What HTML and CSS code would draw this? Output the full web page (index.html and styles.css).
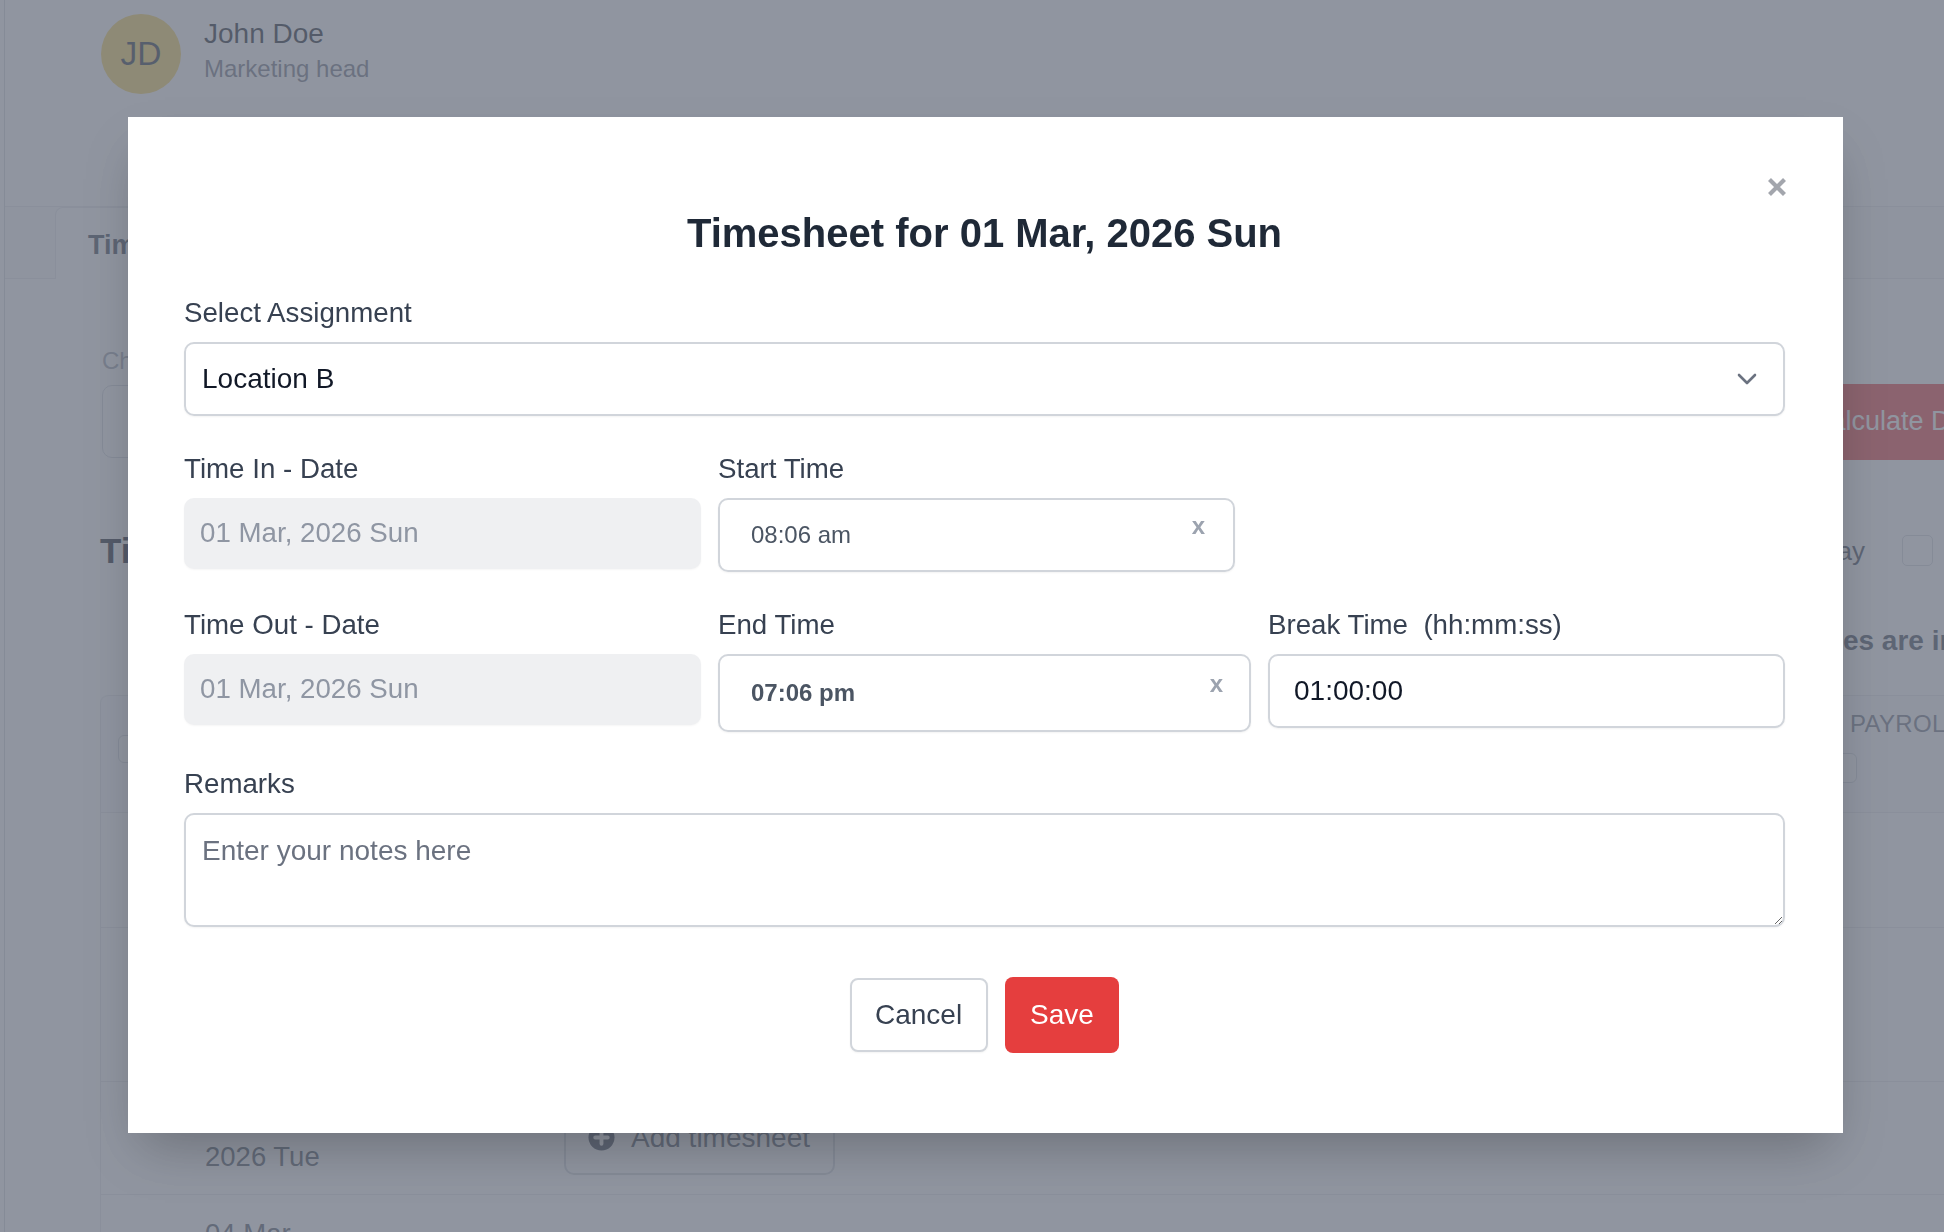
FILE: index.html
```html
<!DOCTYPE html>
<html lang="en">
<head>
<meta charset="utf-8">
<title>Timesheet</title>
<link rel="stylesheet" href="styles.css">
</head>
<body>
<div class="page">
  <div class="shell">
    <header class="topbar">
      <div class="avatar">JD</div>
      <div class="who">
        <div class="who-name">John Doe</div>
        <div class="who-role">Marketing head</div>
      </div>
    </header>
    <nav class="tabs">
      <div class="tab tab-active">Timesheet</div>
    </nav>
    <main class="content">
      <div class="filters">
        <div class="filter-field">
          <div class="filter-label">Choose</div>
          <div class="filter-input"></div>
        </div>
        <button class="btn-calc">Calculate Daily Hours</button>
      </div>
      <div class="heading-row">
        <h2 class="heading">Timesheets</h2>
        <div class="heading-side">
          <span class="heading-side-text">Show Holiday</span>
          <span class="chk chk-lg"></span>
        </div>
      </div>
      <p class="note">All times are in hours for this period</p>
      <div class="table">
        <div class="thead">
          <span class="chk chk-head"></span>
          <div class="th-col">
            <div class="th-label">PAYROLL</div>
            <span class="chk chk-col"></span>
          </div>
        </div>
        <div class="trow trow-1"></div>
        <div class="trow trow-2"></div>
        <div class="trow trow-3">
          <div class="cell-date">03 Mar,<br>2026 Tue</div>
          <button class="btn-add">
            <svg class="btn-add-icon" viewBox="0 0 28 28" width="27" height="27" aria-hidden="true">
              <circle cx="14" cy="14" r="13.5" fill="#374151"/>
              <path d="M14 7.5v13M7.5 14h13" stroke="#ffffff" stroke-width="4" stroke-linecap="round"/>
            </svg>
            <span>Add timesheet</span>
          </button>
        </div>
        <div class="trow trow-4">
          <div class="cell-date">04 Mar,<br>2026 Wed</div>
        </div>
      </div>
    </main>
  </div>
</div>

<div class="overlay">
  <div class="modal" role="dialog" aria-modal="true">
    <button class="modal-close" aria-label="Close">
      <svg viewBox="0 0 20 20" width="20" height="20" aria-hidden="true">
        <path d="M2.5 2.5L17.5 17.5M17.5 2.5L2.5 17.5" stroke="#a3a6ad" stroke-width="4.2" stroke-linecap="butt"/>
      </svg>
    </button>
    <h1 class="modal-title">Timesheet for 01 Mar, 2026 Sun</h1>

    <div class="field field-first">
      <label class="field-label">Select Assignment</label>
      <div class="select">
        <span class="select-value">Location B</span>
        <svg class="select-chevron" viewBox="0 0 20 12" width="20" height="12" aria-hidden="true">
          <path d="M2 2L10 10L18 2" fill="none" stroke="#6b7280" stroke-width="2.6" stroke-linecap="round" stroke-linejoin="round"/>
        </svg>
      </div>
    </div>

    <div class="grid-row">
      <div class="field">
        <label class="field-label">Time In - Date</label>
        <div class="date-box">01 Mar, 2026 Sun</div>
      </div>
      <div class="field">
        <label class="field-label">Start Time</label>
        <div class="time-box time-start">
          <span class="time-value">08:06 am</span>
          <span class="time-clear time-clear-start">x</span>
        </div>
      </div>
    </div>

    <div class="grid-row">
      <div class="field">
        <label class="field-label">Time Out - Date</label>
        <div class="date-box">01 Mar, 2026 Sun</div>
      </div>
      <div class="field">
        <label class="field-label">End Time</label>
        <div class="time-box time-end">
          <span class="time-value time-value-bold">07:06 pm</span>
          <span class="time-clear time-clear-end">x</span>
        </div>
      </div>
      <div class="field">
        <label class="field-label">Break Time&nbsp; (hh:mm:ss)</label>
        <div class="break-box">01:00:00</div>
      </div>
    </div>

    <div class="field field-remarks">
      <label class="field-label">Remarks</label>
      <textarea class="remarks" placeholder="Enter your notes here"></textarea>
    </div>

    <div class="actions">
      <button class="btn btn-cancel">Cancel</button>
      <button class="btn btn-save">Save</button>
    </div>
  </div>
</div>
</body>
</html>
```

FILE: styles.css
```css
* { box-sizing: border-box; }

html, body {
  margin: 0;
  padding: 0;
  width: 1944px;
  height: 1232px;
  overflow: hidden;
  background: #ffffff;
  font-family: "Liberation Sans", Arial, Helvetica, sans-serif;
}

button { font-family: inherit; cursor: pointer; }

/* ---------- background page ---------- */
.page {
  width: 1944px;
  height: 1232px;
  overflow: hidden;
  background: #ffffff;
}

.shell {
  margin-left: 4px;
  border-left: 1px solid #d1d5db;
  height: 1232px;
}

.topbar {
  height: 206px;
  display: flex;
  align-items: flex-start;
  padding: 14px 0 0 96px;
}

.avatar {
  width: 80px;
  height: 80px;
  border-radius: 50%;
  background: #f6d25a;
  color: #1f2937;
  font-size: 33.5px;
  display: flex;
  align-items: center;
  justify-content: center;
  flex: none;
}

.who { margin-left: 23px; margin-top: 2px; }
.who-name { font-size: 28px; line-height: 36px; color: #111827; }
.who-role { font-size: 24px; line-height: 32px; color: #6b7280; margin-top: 1px; }

.tabs {
  height: 73px;
  border-top: 1px solid #e5e7eb;
  border-bottom: 1px solid #e5e7eb;
  background: #fafafb;
  display: flex;
  align-items: flex-end;
  padding-left: 50px;
}

.tab {
  height: 72px;
  margin-bottom: -1px;
  padding: 3px 32px 0;
  display: flex;
  align-items: center;
  font-size: 27px;
  font-weight: 700;
  color: #374151;
  background: #ffffff;
  border: 1px solid #e5e7eb;
  border-bottom: none;
  border-radius: 8px 8px 0 0;
}

.content { padding: 65.7px 0 0 95px; }

.filters {
  display: flex;
  align-items: flex-end;
  width: max-content;
}

.filter-field {
  width: 1681px;
  margin-left: 2px;
  padding-bottom: 2px;
}

.filter-label {
  font-size: 24px;
  line-height: 32px;
  color: #9ca3af;
  margin-bottom: 8.3px;
}

.filter-input {
  width: 560px;
  height: 73px;
  border: 1.5px solid #d1d5db;
  border-radius: 10px;
}

.btn-calc {
  height: 76px;
  padding: 0 28px;
  border: none;
  border-radius: 8px;
  background: #ea3a3c;
  color: #ffffff;
  font-size: 27px;
  white-space: nowrap;
}

.heading-row {
  width: 1833px;
  margin-top: 69px;
  display: flex;
  align-items: center;
  justify-content: space-between;
}

.heading {
  margin: 0;
  font-size: 35px;
  line-height: 44px;
  font-weight: 700;
  color: #111827;
}

.heading-side { display: flex; align-items: center; gap: 37px; }
.heading-side-text { font-size: 26px; line-height: 34px; color: #374151; }

.chk {
  display: block;
  border: 1.5px solid #d1d5db;
  border-radius: 5px;
  background: #ffffff;
  flex: none;
}
.chk-lg { width: 31px; height: 31px; }
.chk-head { width: 28px; height: 28px; margin-top: 39px; border-radius: 6px; }
.chk-col { width: 30px; height: 30px; margin-top: 14.3px; border-radius: 6px; }

.note {
  margin: 50px 0 0 1657.4px;
  font-size: 28px;
  line-height: 36px;
  font-weight: 700;
  color: #374151;
  white-space: nowrap;
}

.table {
  margin-top: 36px;
  width: 1900px;
  border-left: 1px solid #e5e7eb;
  border-top-left-radius: 8px;
}

.thead {
  height: 118px;
  border-top: 1px solid #e5e7eb;
  border-bottom: 1px solid #e5e7eb;
  border-top-left-radius: 8px;
  display: flex;
  align-items: flex-start;
  padding-left: 17px;
  background: #fbfbfc;
}

.th-col { margin-left: 1681px; margin-top: 12.7px; }
.th-label {
  font-size: 24px;
  line-height: 30px;
  color: #6b7280;
  padding-left: 23px;
  letter-spacing: 0.3px;
}

.trow {
  border-bottom: 1px solid #e5e7eb;
  display: flex;
  align-items: center;
}
.trow-1 { height: 115px; }
.trow-2 { height: 154px; }
.trow-3 { height: 113px; }
.trow-4 { height: 60px; align-items: flex-start; padding-top: 20px; border-bottom: none; }

.cell-date {
  width: 463px;
  padding-left: 104px;
  font-size: 27.5px;
  line-height: 38px;
  color: #4b5563;
  flex: none;
}

.btn-add {
  width: 271px;
  height: 74px;
  border: 2px solid #d1d5db;
  border-radius: 10px;
  background: #ffffff;
  display: flex;
  align-items: center;
  gap: 16px;
  padding: 0 0 0 22px;
  font-size: 28px;
  color: #4b5563;
}
.btn-add-icon { flex: none; }

/* ---------- overlay + modal ---------- */
.overlay {
  position: fixed;
  inset: 0;
  background: rgba(107, 114, 128, 0.75);
}

.modal {
  position: absolute;
  left: 128px;
  top: 117px;
  width: 1715px;
  padding: 92px 58px 80px 56px;
  background: #ffffff;
  box-shadow: 0 25px 50px -12px rgba(0, 0, 0, 0.25);
}

.modal-close {
  position: absolute;
  left: 1639px;
  top: 60px;
  width: 20px;
  height: 20px;
  padding: 0;
  border: none;
  background: transparent;
  display: block;
}
.modal-close svg { display: block; }

.modal-title {
  margin: 0;
  text-align: center;
  font-size: 40px;
  line-height: 48px;
  font-weight: 700;
  color: #1f2937;
}

.field-first { margin-top: 36.4px; }

.field-label {
  display: block;
  font-size: 27.7px;
  line-height: 40px;
  color: #374151;
  margin-bottom: 8.5px;
  white-space: nowrap;
}

.select {
  height: 74px;
  border: 2px solid #d1d5db;
  border-radius: 10px;
  padding: 0 26px 0 16px;
  display: flex;
  align-items: center;
  justify-content: space-between;
  box-shadow: 0 1px 2px rgba(0, 0, 0, 0.05);
}
.select-value { font-size: 28px; color: #111827; }
.select-chevron { display: block; }

.grid-row {
  margin-top: 33.5px;
  display: grid;
  grid-template-columns: 517px 533px 517px;
  column-gap: 17px;
  align-items: start;
}

.date-box {
  height: 71px;
  border-radius: 10px;
  background: #eff0f2;
  padding-left: 16px;
  display: flex;
  align-items: center;
  font-size: 27.7px;
  color: #8f96a3;
  box-shadow: 0 1px 2px rgba(0, 0, 0, 0.04);
}

.time-box {
  position: relative;
  border: 2px solid #d1d5db;
  border-radius: 10px;
  padding-left: 31px;
  display: flex;
  align-items: center;
  box-shadow: 0 1px 2px rgba(0, 0, 0, 0.05);
}
.time-start { width: 517px; height: 74px; }
.time-end { width: 533px; height: 78px; }

.time-value { font-size: 24px; color: #4b5563; }
.time-value-bold { font-weight: 700; }

.time-clear {
  position: absolute;
  font-size: 24px;
  line-height: 24px;
  color: #9ca3af;
  font-weight: 700;
}
.time-clear-start { top: 14px; right: 28px; }
.time-clear-end { top: 16px; right: 26px; }

.break-box {
  height: 74px;
  border: 2px solid #d1d5db;
  border-radius: 10px;
  padding-left: 24px;
  display: flex;
  align-items: center;
  font-size: 28px;
  color: #111827;
  box-shadow: 0 1px 2px rgba(0, 0, 0, 0.05);
}

.field-remarks { margin-top: 32.5px; }

.remarks {
  display: block;
  width: 100%;
  height: 114px;
  margin: 0;
  border: 2px solid #d1d5db;
  border-radius: 10px;
  padding: 16px 16px;
  font-family: "Liberation Sans", Arial, Helvetica, sans-serif;
  font-size: 28px;
  line-height: 40px;
  color: #111827;
  resize: vertical;
  outline: none;
  box-shadow: 0 1px 2px rgba(0, 0, 0, 0.05);
}
.remarks::placeholder { color: #6b7280; opacity: 1; }

.actions {
  margin-top: 50px;
  display: flex;
  justify-content: center;
  align-items: center;
  gap: 17px;
}

.btn {
  font-size: 28px;
  border-radius: 8px;
  display: flex;
  align-items: center;
  justify-content: center;
}

.btn-cancel {
  height: 74px;
  padding: 0 23.4px;
  border: 2px solid #d1d5db;
  background: #ffffff;
  color: #374151;
  box-shadow: 0 1px 2px rgba(0, 0, 0, 0.05);
}

.btn-save {
  height: 76px;
  padding: 0 25.5px;
  border: none;
  background: #e53e3e;
  color: #ffffff;
}
```
